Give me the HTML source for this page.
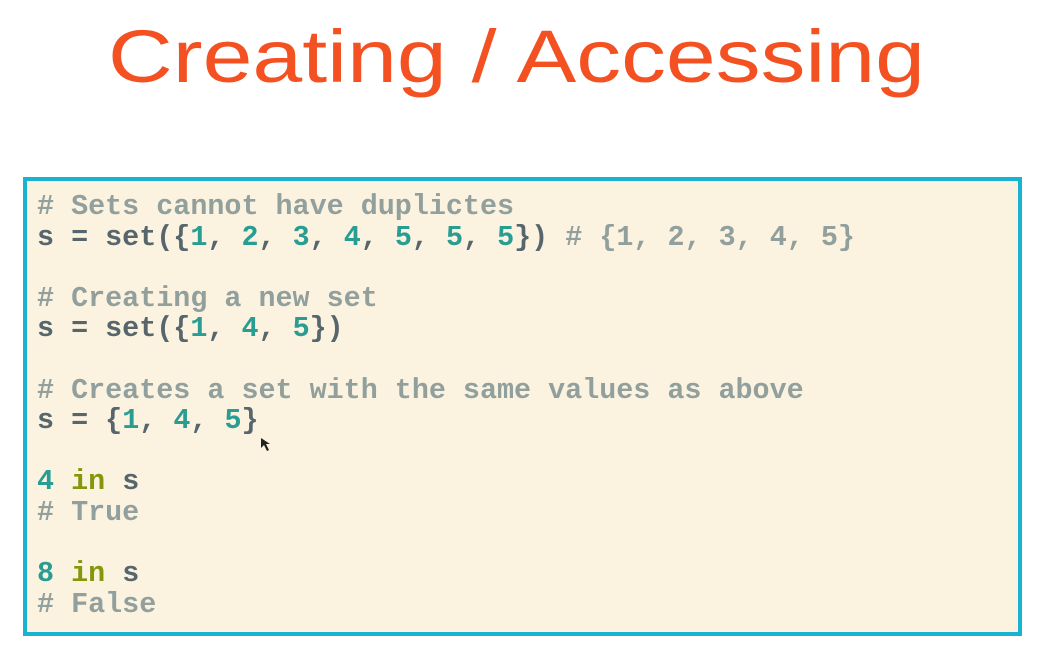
<!DOCTYPE html>
<html><head><meta charset="utf-8"><style>
html,body{margin:0;padding:0;background:#fff;width:1064px;height:654px;overflow:hidden;position:relative}
.t{position:absolute;left:0;top:0}
.box{position:absolute;left:23px;top:177px;width:991px;height:451px;border:4px solid #17b3d0;background:#fbf3e0}
pre{margin:0;position:absolute;left:10px;top:11px;font-family:"Liberation Mono",monospace;font-weight:bold;font-size:28.4px;line-height:30.6px;color:#56666c}
.c{color:#919f9d}.n{color:#2a9d93}.k{color:#84960a}
</style></head><body>
<svg class="t" width="1064" height="120"><text x="108" y="82" textLength="817" lengthAdjust="spacingAndGlyphs" font-family="Liberation Sans, sans-serif" font-size="74" fill="#f45122">Creating / Accessing</text></svg>
<div class="box"><pre><span class="c"># Sets cannot have duplictes</span>
s = set({<span class="n">1</span>, <span class="n">2</span>, <span class="n">3</span>, <span class="n">4</span>, <span class="n">5</span>, <span class="n">5</span>, <span class="n">5</span>}) <span class="c"># {1, 2, 3, 4, 5}</span>

<span class="c"># Creating a new set</span>
s = set({<span class="n">1</span>, <span class="n">4</span>, <span class="n">5</span>})

<span class="c"># Creates a set with the same values as above</span>
s = {<span class="n">1</span>, <span class="n">4</span>, <span class="n">5</span>}

<span class="n">4</span> <span class="k">in</span> s
<span class="c"># True</span>

<span class="n">8</span> <span class="k">in</span> s
<span class="c"># False</span></pre></div>
<svg style="position:absolute;left:260px;top:437px" width="12" height="16"><path d="M1 1 L1 11 L4 8 L7 14 L9 13 L6 7 L10 7 Z" fill="#222"/></svg>
</body></html>
